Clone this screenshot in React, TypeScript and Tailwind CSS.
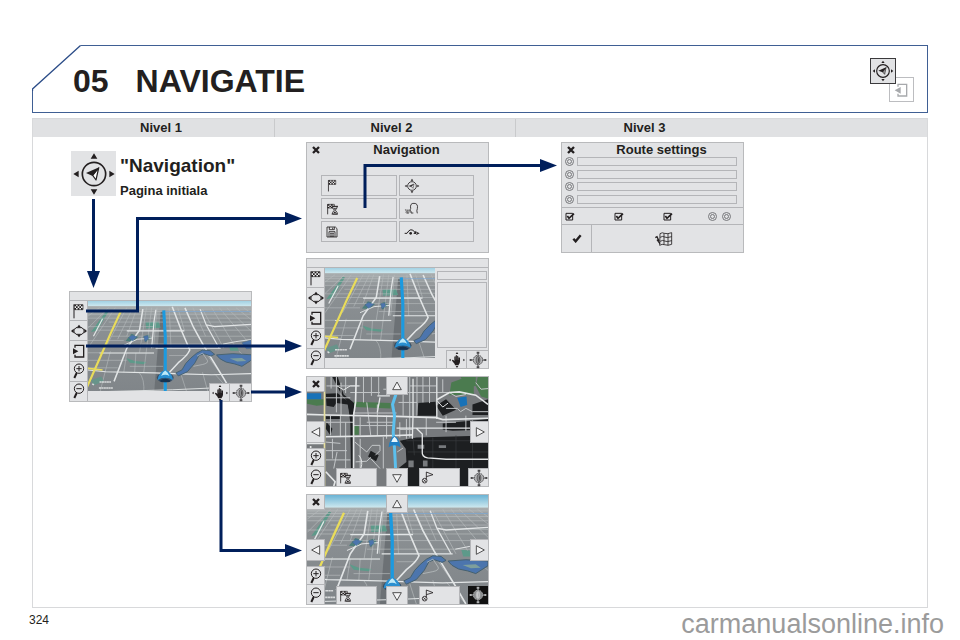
import React from 'react';

type IconProps = { className?: string };

const tile = 'flex items-center justify-center bg-[#e2e3e5] border border-[#b4b5b8]';
const frame = 'w-[183px] h-[111px] bg-[#e2e3e5] border border-[#b9babc]';

/* ---------- Icons ---------- */

const GpsIcon: React.FC<IconProps> = ({ className = 'w-[44px] h-[44px]' }) => (
  <svg viewBox="0 0 132 132" className={className} fill="#231f20" aria-hidden="true">
    <circle cx="66" cy="66" r="35" fill="none" stroke="#231f20" strokeWidth="5" />
    <path d="M66 4 L76 20 H56 Z M66 128 L76 112 H56 Z M4 66 L20 56 V76 Z M128 66 L112 56 V76 Z" />
    <path d="M80 48 L72 84 L62 70 Z" fill="#fff" stroke="#231f20" strokeWidth="3.5" strokeLinejoin="round" />
    <path d="M83 45 L42 63 L62 72 Z" />
  </svg>
);

const SmallGpsIcon: React.FC<IconProps> = ({ className = 'w-[16px] h-[16px]' }) => (
  <svg viewBox="0 0 48 48" className={className} fill="#231f20" aria-hidden="true">
    <circle cx="24" cy="24" r="13" fill="none" stroke="#231f20" strokeWidth="2.5" />
    <path d="M24 2 L28 8 H20 Z M24 46 L28 40 H20 Z M2 24 L8 20 V28 Z M46 24 L40 20 V28 Z" />
    <path d="M30 18 L27 31 L22 26 L16 24 Z" fill="none" stroke="#231f20" strokeWidth="1.5" />
    <path d="M30 18 L16 24 L22 26 Z" />
  </svg>
);

/* Same mark as GpsIcon, with heavier strokes for the header badge */
const BadgeGpsIcon: React.FC = () => (
  <svg viewBox="0 0 72 72" className="w-[24px] h-[24px]" fill="#231f20" aria-hidden="true">
    <circle cx="36" cy="36" r="19" fill="none" stroke="#231f20" strokeWidth="3.5" />
    <path d="M36 5 L41 12 H31 Z M36 67 L41 60 H31 Z M5 36 L12 31 V41 Z M67 36 L60 31 V41 Z" />
    <path d="M45 26 L41 46 L35 39 Z" fill="#aaa" stroke="#231f20" strokeWidth="2" />
    <path d="M47 24 L22 35 L35 40 Z" />
  </svg>
);

const FlagIcon: React.FC<IconProps> = ({ className = 'w-[16px] h-[16px]' }) => (
  <svg viewBox="0 0 48 48" className={className} aria-hidden="true">
    <path d="M9 4 V46" stroke="#231f20" strokeWidth="3" />
    <path d="M10 5 H36 V20 H10 Z" fill="#eee" stroke="#231f20" strokeWidth="2" />
    <path
      d="M10 5h5v5h-5z M20 5h5v5h-5z M30 5h5v5h-5z M15 10h5v5h-5z M25 10h5v5h-5z M10 15h5v5h-5z M20 15h5v5h-5z M30 15h5v5h-5z"
      fill="#231f20"
    />
  </svg>
);

const FlagHourglassIcon: React.FC<IconProps> = ({ className = 'w-[14px] h-[12px]' }) => (
  <svg viewBox="0 0 42 36" className={className} aria-hidden="true">
    <path d="M5 4 V34" stroke="#231f20" strokeWidth="2.5" />
    <path d="M5 4 H25 V15 H5 Z" fill="#eee" stroke="#231f20" strokeWidth="2" />
    <path d="M5 4h5v4h-5z M15 4h5v4h-5z M10 8h5v4h-5z M20 8h5v4h-5z M5 12h5v3h-5z M15 12h5v3h-5z" fill="#231f20" />
    <path d="M17 10 H36 M17 33 H36" stroke="#231f20" strokeWidth="3" />
    <path d="M20 11 V15 L25 21.500 L20 28 V33 H33 V28 L28 21.500 L33 15 V11 Z" fill="#e2e3e5" stroke="#231f20" strokeWidth="2.500" />
    <path d="M22 31 L26.500 25 L31 31 Z M22 16 H31 L26.500 20 Z" fill="#231f20" />
  </svg>
);

const TargetIcon: React.FC = () => (
  <svg viewBox="0 0 48 48" className="w-[16px] h-[16px]" fill="#231f20" aria-hidden="true">
    <path d="M15 14 H33 Q34 18 39 19 V29 Q34 30 33 34 H15 Q14 30 9 29 V19 Q14 18 15 14 Z" fill="none" stroke="#231f20" strokeWidth="3" />
    <path d="M24 5 L30 13 H18 Z M24 43 L30 35 H18 Z M0 24 L8 17 V31 Z M48 24 L40 17 V31 Z" />
  </svg>
);

const EnterIcon: React.FC<{ color?: string; flip?: boolean; className?: string }> = ({
  color = '#231f20',
  flip = false,
  className = 'w-[16px] h-[16px]',
}) => (
  <svg viewBox="0 0 48 48" className={className} aria-hidden="true">
    <path d="M12 14 V7 H38 V42 H12 V35" fill="none" stroke={color} strokeWidth="4" />
    <path d={flip ? 'M2 25 L20 15 V35 Z' : 'M22 25 L6 16 V34 Z'} fill={color} />
  </svg>
);

const ZoomIcon: React.FC<{ plus?: boolean }> = ({ plus = false }) => (
  <svg viewBox="0 0 48 48" className="w-[16px] h-[16px]" fill="none" stroke="#231f20" aria-hidden="true">
    <circle cx="24" cy="17" r="14" strokeWidth="3" />
    <path d={plus ? 'M16 17 H32 M24 9 V25' : 'M16 17 H32'} strokeWidth="3" />
    <path d="M17 30 L10 45" strokeWidth="6" />
  </svg>
);

const HandIcon: React.FC = () => (
  <svg viewBox="0 0 54 48" className="w-[18px] h-[16px]" fill="#231f20" aria-hidden="true">
    <path d="M27 0 L31 6 H23 Z M27 48 L31 42 H23 Z M3 24 L8 20 V28 Z M51 24 L46 20 V28 Z" />
    <path d="M20 36 L12 26 Q12 22 16 24 L19 27 V15 Q21 11 23 15 V11 Q25 7 27 11 V13 Q30 9 31 14 V17 Q35 14 36 19 V29 Q36 33 32 38 V40 H21 Z" />
    <path d="M23 14 V23 M27 12 V23 M31 16 V24" stroke="#aaa" strokeWidth="1" />
  </svg>
);

const CompassIcon: React.FC<{ dark?: boolean }> = ({ dark = false }) => {
  const ink = dark ? '#aeb0b2' : '#4b4a4c';
  return (
    <svg viewBox="0 0 54 54" className="w-[18px] h-[18px]" aria-hidden="true">
      <path d="M27 3 V51 M3 27 H51" stroke={ink} strokeWidth="3" />
      <circle cx="27" cy="27" r="14" fill={dark ? '#8a8c8e' : '#b4b5b7'} stroke={ink} strokeWidth="3" strokeDasharray="5 2" />
      <ellipse cx="27" cy="27" rx="6" ry="11" fill={dark ? '#c8c9cb' : '#8b8c8e'} stroke={ink} strokeWidth="2" />
      <path d="M27 17 L31 27 L27 37 Z" fill={ink} />
      <path d="M23 2h8v6h-8z M23 46h8v6h-8z M2 24h6v6h-6z M46 24h6v6h-6z" fill={ink} />
    </svg>
  );
};

const CloseIcon: React.FC = () => (
  <svg viewBox="0 0 24 24" className="w-[8px] h-[8px]" aria-hidden="true">
    <path d="M3 3 L21 21 M21 3 L3 21" stroke="#231f20" strokeWidth="7" />
  </svg>
);

const TriangleIcon: React.FC<{ d: string }> = ({ d }) => (
  <svg viewBox="0 0 36 36" className="w-[12px] h-[12px]" aria-hidden="true">
    <path d={d} fill="#f4f4f5" stroke="#333" strokeWidth="2.500" />
  </svg>
);

const VoiceIcon: React.FC = () => (
  <svg viewBox="0 0 48 42" className="w-[16px] h-[14px]" fill="none" stroke="#231f20" strokeWidth="2.500" aria-hidden="true">
    <path d="M20 20 Q17 3 30 4 Q43 4 40 20 Q37 26 40 34 M20 20 L17 25 L21 27 V33 H28" />
    <path d="M14 23 Q17 29 13 35 M9 22 Q13 29 9 36 M4 22 Q9 28 6 33" strokeWidth="2" />
  </svg>
);

const SaveIcon: React.FC = () => (
  <svg viewBox="0 0 36 36" className="w-[12px] h-[12px]" fill="none" stroke="#231f20" strokeWidth="2.500" aria-hidden="true">
    <path d="M3 3 H28 L33 8 V33 H3 Z M10 3 V11 H25 V3 M20 5 V10 M9 33 V17 H27 V33 M12 22 H24 M12 27 H24 M12 31 H24" />
  </svg>
);

const DetourIcon: React.FC = () => (
  <svg viewBox="0 0 48 24" className="w-[16px] h-[8px]" aria-hidden="true">
    <path d="M2 16 H9 Q20 -4 33 13" fill="none" stroke="#231f20" strokeWidth="3" />
    <path d="M40 18 L28 17 L36 8 Z M47 16 L37 11 V21 Z" fill="#231f20" />
    <circle cx="20" cy="16" r="4" fill="#231f20" />
  </svg>
);

const WaypointIcon: React.FC = () => (
  <svg viewBox="0 0 45 39" className="w-[15px] h-[13px]" fill="none" stroke="#231f20" strokeWidth="2.500" aria-hidden="true">
    <path d="M19 24 V3 L39 11 L19 17" />
    <circle cx="14" cy="29" r="7" />
    <path d="M10 25 L18 33 M18 25 L10 33" strokeWidth="2" />
  </svg>
);

const MapFoldIcon: React.FC = () => (
  <svg viewBox="0 0 60 48" className="w-[20px] h-[16px]" fill="none" stroke="#231f20" strokeWidth="2.500" aria-hidden="true">
    <path d="M15 8 Q22 3 28 7 Q38 10 50 5 V40 Q40 45 28 41 Q22 38 14 43 Z M27 7 V41 M39 8 V43 M15 19 Q24 14 29 18 T50 17 M15 31 Q24 26 29 30 T50 29" />
    <path d="M1 20 L6 17 L12 30 M6 26 L15 38" strokeWidth="4" />
  </svg>
);

const CheckedBox: React.FC<{ label: string }> = ({ label }) => (
  <label className="flex w-[10px] h-[9px]">
    <input type="checkbox" defaultChecked aria-label={label} className="sr-only" />
    <svg viewBox="0 0 30 27" className="w-[10px] h-[9px]" fill="none" stroke="#231f20" aria-hidden="true">
      <path d="M3 4 H23 V24 H3 Z" strokeWidth="3" />
      <path d="M7 12 L12 19 L27 5" strokeWidth="5" />
    </svg>
  </label>
);

const Ring: React.FC<{ label: string; name: string }> = ({ label, name }) => (
  <input
    type="radio"
    name={name}
    aria-label={label}
    className="appearance-none w-[9px] h-[9px] rounded-full border border-[#77787b] outline-1 outline-[#77787b] -outline-offset-[3px]"
  />
);

/* ---------- Maps ---------- */

const Car: React.FC<{ x: number; y: number }> = ({ x, y }) => (
  <g transform={`translate(${x} ${y})`}>
    <ellipse cx="0" cy="4" rx="28" ry="16" fill="#1f3d5c" opacity="0.7" />
    <path d="M-26 12 Q-22 -16 0 -22 Q22 -16 26 12 Q0 -4 -26 12 Z" fill="#2a8fd0" />
    <path d="M-14 -2 Q-8 -16 0 -20 Q8 -16 14 -2 Q0 -10 -14 -2 Z" fill="#bfeaf8" />
    <path d="M-18 14 Q0 0 18 14 L14 18 H-14 Z" fill="#17324f" />
  </g>
);

const PerspectiveMap: React.FC<{ viewBox: string; id: string }> = ({ viewBox, id }) => (
  <svg viewBox={viewBox} preserveAspectRatio="none" className="w-full h-full" aria-hidden="true">
    <defs>
      <linearGradient id={`${id}-sky`} x1="0" y1="0" x2="0" y2="1">
        <stop offset="0" stopColor="#4ba3cd" />
        <stop offset="1" stopColor="#d3ebf0" />
      </linearGradient>
      <linearGradient id={`${id}-land`} x1="0" y1="0" x2="0" y2="1">
        <stop offset="0" stopColor="#a9aeaf" />
        <stop offset="0.15" stopColor="#8c9194" />
        <stop offset="1" stopColor="#7f8488" />
      </linearGradient>
    </defs>
    <rect x="0" y="0" width="600" height="52" fill={`url(#${id}-sky)`} />
    <rect x="0" y="50" width="600" height="310" fill={`url(#${id}-land)`} />
    <path d="M262 68 H275 L270 342 H240 Z" fill="#6c7175" />

    {/* parks */}
    <g fill="#5d9a8a">
      <path d="M85 62 L92 64 L52 132 L32 136 Z" />
      <path d="M212 104 L255 102 L262 122 L214 124 Z" />
      <path d="M486 178 L512 180 L520 198 L492 198 Z M555 182 H567 V196 H558 Z" />
      <path d="M148 222 L176 232 L215 236 L206 243 L160 238 Z" />
      <path d="M146 166 L165 142 L190 150 L170 168 Z M204 150 L222 144 L230 156 L212 170 Z" fill="#4d7f7c" />
    </g>

    {/* small streets */}
    <g fill="none" stroke="#b6babc" strokeWidth="2">
      <path d="M20 60 H567 M20 68 H567 M20 77 H567 M20 90 H567 M90 103 H567 M20 118 H240 M275 116 H567 M50 130 H567 M100 150 H567 M20 164 H140 M200 176 H567 M20 205 H240 M290 214 H350 M20 230 H150 M160 250 H270 M20 255 H120" />
      <path d="M60 55 L20 85 M90 55 L20 125 M112 55 L28 180 M150 55 L84 180 M170 55 L120 160 M184 55 L150 150 M215 55 L192 205 M232 55 L206 270 M250 55 L238 190 M290 55 L296 190 M318 55 L340 130 M368 55 L410 150 M400 60 L470 190 M430 55 L505 180 M455 55 L567 190 M480 55 L567 140 M510 55 L567 100 M535 55 L567 78" />
      <path d="M96 200 L60 342 M150 205 L140 270 M180 205 L176 270 M296 130 H340 M400 190 L470 290 M330 280 L350 342 M440 275 L500 342 M520 200 L567 240 M190 270 Q210 290 206 342 M400 270 L420 342" />
    </g>

    {/* avenues */}
    <g fill="none" stroke="#e2e5e6" strokeWidth="5">
      <path d="M203 60 L192 130 L150 190 L108 300" />
      <path d="M246 62 L240 100 L232 190" strokeWidth="4" />
      <path d="M300 52 L330 130 L358 196 Q350 215 320 238 L285 276" />
      <path d="M342 56 L370 120 L404 182 L470 290 L500 342" />
      <path d="M392 60 L412 112 L455 190 M412 112 L440 118 L567 110" strokeWidth="4" />
      <path d="M70 92 L40 150 M150 132 H340 M245 190 H460 M20 262 L80 268 L240 272 L330 275 L430 278 L567 274" strokeWidth="4" />
      <path d="M60 206 H240 M40 335 L300 328 L430 322" strokeWidth="3" />
      <path d="M140 180 L185 160 L235 156 M468 176 L510 168 L567 160" strokeWidth="3" />
    </g>

    {/* lakes */}
    <g fill="#4c75ad" stroke="#45606e" strokeWidth="3">
      <path d="M400 196 L425 198 L440 210 L428 216 L405 208 L388 214 L374 240 L350 268 L320 282 L312 272 L332 262 L345 240 L362 222 Q380 204 400 196 Z" />
      <path d="M446 212 L500 208 L567 212 V226 L530 250 L506 242 L478 236 Q454 226 446 212 Z" />
      <path d="M156 154 L168 146 L184 152 L168 166 Z M206 150 L220 148 L222 158 L210 168 Z" strokeWidth="1" />
      <path d="M530 172 L567 160 V190 L545 192 Z" strokeWidth="1" />
    </g>
    <path d="M490 224 L530 222 L545 232 L515 234 Z" fill="#7f9f9c" />
    <path d="M382 216 L400 206 L416 230 Q420 240 400 244 L370 250" fill="none" stroke="#c3c8ca" strokeWidth="2" />

    {/* yellow road */}
    <path d="M131 66 L96 142 L60 225 L14 330" fill="none" stroke="#e9dc5a" strokeWidth="7" />
    <path d="M14 256 L70 262" fill="none" stroke="#e9dc5a" strokeWidth="5" />

    {/* route */}
    <path d="M272 68 H567" stroke="#6f9fce" strokeWidth="2" />
    <path d="M272 64 L277 150 V342" fill="none" stroke="#1b9ae0" strokeWidth="10" />
    <Car x={277} y={284} />
    <path d="M32 296 L66 284 L74 300 L40 314 Z" fill="#5d9a8a" opacity="0.7" />
    <path d="M60 302 H98 M36 308 L42 312 M58 322 H104" stroke="#d8dadb" strokeWidth="5" strokeDasharray="7 1" />
  </svg>
);

const FlatMap: React.FC = () => (
  <svg viewBox="19 13 548 330" preserveAspectRatio="none" className="w-full h-full" aria-hidden="true">
    <rect x="0" y="0" width="600" height="360" fill="#777a7d" />
    <g fill="#1d1f21">
      <path d="M76 64 L112 62 L140 84 L162 92 V118 H148 L142 96 L108 92 L100 104 L78 100 Z" />
      <path d="M96 13 L122 64 L142 88 L150 150 L152 290 H162 L158 150 L160 90 L130 66 L112 13 Z" />
      <path d="M356 92 L408 88 L412 130 H352 Z M430 154 L567 140 V172 L460 176 L430 172 Z" />
      <path d="M300 206 L350 196 L567 190 V343 H292 V292 L320 270 L318 230 Z" />
      <path d="M76 132 H120 V140 H76 Z M410 100 L440 80 L470 112 L430 130 Z M520 96 L567 80 V128 H520 Z" />
      <path d="M204 254 L212 236 L236 250 L228 268 Z M78 150 L96 170 L90 190 L76 170 Z" />
    </g>
    <g fill="#4b7b4f">
      <path d="M19 80 H70 V98 L48 100 L19 94 Z M160 88 L272 92 V108 L164 104 Z M160 160 H176 V188 H160 Z" />
      <path d="M456 30 L500 14 H524 V66 L450 68 Z M536 13 H567 V78 L546 72 L530 40 Z M484 13 H530 V40 L500 44 Z" />
    </g>
    <path d="M19 62 H62 V80 H19 Z M474 76 L502 72 L504 98 L484 104 Z" fill="#1872b8" />

    <path d="M320 206 H567 M324 240 L567 240 M340 196 L344 250 M400 196 V343 M470 190 V343 M520 190 V343" stroke="#3a3d40" strokeWidth="2" />
    <path d="M354 218 H374 V230 H354 Z M418 220 H440 V228 H418 Z M326 266 H342 V286 H326 Z M370 266 H384 V284 H370 Z" fill="#777a7d" />

    <g fill="none" stroke="#c3c6c8" strokeWidth="3">
      <path d="M78 40 H180 M92 13 V48 M108 13 V120 M122 30 V130 M136 13 V62 M76 76 H150 M150 60 H240 M190 13 V90 M214 13 V70 M236 13 V68 M160 122 H290 M200 90 L212 190 M232 96 V190 M250 50 H290 M300 60 H410 M310 13 V130 M330 13 V196 M352 13 V130 M370 13 V90 M390 13 V92 M330 40 H410 M296 90 H352 M400 60 H452 M430 20 V60" />
      <path d="M76 150 H160 M90 130 V190 M120 130 V195 M136 150 V290 M76 210 L120 214 M96 200 V260 M76 236 H140 M110 240 L100 290 M76 264 H150 M160 160 H280 M180 135 V190 M200 150 H280 M260 130 V200 M300 150 V196 M320 140 V200 M380 135 V190 M410 150 H470 M440 130 V180 M500 130 V176 M520 145 V180 M300 172 H340" />
      <path d="M164 210 L200 240 L216 220 H240 V236 L226 250 M166 270 L200 268 L212 256 M180 200 V290 M250 195 V290 M212 260 L240 290 M292 240 L310 228 M440 108 L474 108 L484 118 L500 108 L520 118 H567 M530 30 L546 50 L567 48 M450 60 L470 72 L500 66" />
    </g>

    <g fill="none" stroke="#e4e6e7" strokeWidth="5">
      <path d="M19 126 L80 128 L290 132 L410 136 L430 142 L567 138" />
      <path d="M76 194 L200 192 L290 190 L340 188" />
      <path d="M168 13 L166 90 L160 130 V290 L168 343" />
      <path d="M232 70 H270 M240 75 L232 120 M340 18 V130 L338 200 M412 13 V140" strokeWidth="4" />
      <path d="M412 82 L450 60 L480 58 L530 68 L567 96" />
      <path d="M290 168 H567 M350 168 L368 186 V240 Q366 254 384 258 L440 262 H567" strokeWidth="4" />
      <path d="M19 214 H70 M30 222 V343 M76 300 L104 330 L100 343" />
      <path d="M176 250 Q190 266 182 290 M110 40 L130 52 L150 40 L176 40" strokeWidth="3" />
      <path d="M412 84 L430 104 L446 92" strokeWidth="3" />
    </g>
    <path d="M72 13 V343" stroke="#e6dfa0" strokeWidth="5" />
    <path d="M288 66 L278 96 L284 130 L280 180 L284 230 L290 343" fill="none" stroke="#5cc0ee" strokeWidth="9" />
    <path d="M266 226 Q270 196 284 192 Q298 196 302 226 Q284 214 266 226 Z" fill="#1f7fc4" />
    <path d="M274 210 Q278 198 284 194 Q292 200 294 210 Z" fill="#e8f7fc" />
  </svg>
);

/* ---------- Screens ---------- */

const sideButtons = [
  { label: 'Destination', icon: <FlagIcon /> },
  { label: 'Recentre', icon: <TargetIcon /> },
  { label: 'Switch view', icon: <EnterIcon /> },
  { label: 'Zoom in', icon: <ZoomIcon plus /> },
  { label: 'Zoom out', icon: <ZoomIcon /> },
];

const SideBar: React.FC = () => (
  <div className="w-[18px] shrink-0 flex flex-col border-r border-[#b4b5b8] divide-y divide-[#b4b5b8]">
    {sideButtons.map((b) => (
      <button key={b.label} aria-label={b.label} className="flex-1 min-h-0 flex items-center justify-center">
        {b.icon}
      </button>
    ))}
  </div>
);

const CornerButtons: React.FC = () => (
  <div className="absolute right-0 bottom-0 flex">
    <button aria-label="Move map" className={`${tile} w-[21px] h-[18px] border-b-0`}><HandIcon /></button>
    <button aria-label="Orientation" className={`${tile} w-[21px] h-[18px] border-b-0 border-x-0`}><CompassIcon /></button>
  </div>
);

const HomeScreen: React.FC = () => (
  <div className={`${frame} flex flex-col relative`}>
    <div className="h-[9px] border-b border-[#b4b5b8]" />
    <div className="flex-1 min-h-0 flex">
      <SideBar />
      <div className="flex-1 flex flex-col">
        <div className="flex-1 min-h-0"><PerspectiveMap id="home" viewBox="22 33 538 299" /></div>
        <div className="h-[10px]" />
      </div>
    </div>
    <CornerButtons />
  </div>
);

const SplitScreen: React.FC = () => (
  <div className={`${frame} flex flex-col relative`}>
    <div className="h-[9px] border-b border-[#b4b5b8]" />
    <div className="flex-1 min-h-0 flex">
      <SideBar />
      <div className="flex-1 flex flex-col">
        <div className="flex-1 min-h-0"><PerspectiveMap id="split" viewBox="28 33 352 296" /></div>
        <div className="h-[10px]" />
      </div>
      <div className="w-[53px] pt-[3px] pl-[2px] pr-px flex flex-col gap-[2px]">
        <div className="h-[9px] border border-[#b4b5b8]" />
        <div className="h-[66px] border border-[#b4b5b8]" />
      </div>
    </div>
    <CornerButtons />
  </div>
);

const MapControls: React.FC<{ children: React.ReactNode; dark?: boolean }> = ({ children, dark }) => (
  <div className={`${frame} relative`}>
    <div className="absolute inset-0">{children}</div>
    <div className="relative h-full flex flex-col">
      <div className="flex items-start h-[18px]">
        <button aria-label="Close" className={`${tile} w-[18px] h-[15px] border-t-0 border-l-0`}><CloseIcon /></button>
        <button aria-label="Up" className={`${tile} w-[22px] h-[18px] border-t-0 ml-[61px]`}><TriangleIcon d="M18 6 L31 29 H5 Z" /></button>
      </div>
      <div className="flex justify-between mt-[26px]">
        <button aria-label="Left" className={`${tile} w-[18px] h-[22px] border-l-0`}><TriangleIcon d="M5 18 L29 5 V31 Z" /></button>
        <button aria-label="Right" className={`${tile} w-[18px] h-[22px] border-r-0`}><TriangleIcon d="M31 18 L7 5 V31 Z" /></button>
      </div>
      <div className="flex items-end mt-auto">
        <div className="flex flex-col">
          <button aria-label="Zoom in" className={`${tile} w-[18px] h-[19px] border-l-0`}><ZoomIcon plus /></button>
          <button aria-label="Zoom out" className={`${tile} w-[18px] h-[19px] border-l-0 border-y-0`}><ZoomIcon /></button>
        </div>
        <button aria-label="Options" className={`${tile} w-[41px] h-[18px] border-b-0 ml-[11px] justify-start pl-[2px]`}><FlagHourglassIcon /></button>
        <button aria-label="Down" className={`${tile} w-[22px] h-[18px] border-b-0 ml-[9px]`}><TriangleIcon d="M18 31 L31 8 H5 Z" /></button>
        <button aria-label="Add waypoint" className={`${tile} w-[41px] h-[18px] border-b-0 ml-[11px] justify-start`}><WaypointIcon /></button>
        {dark ? (
          <button aria-label="Orientation" className="flex items-center justify-center w-[20px] h-[18px] ml-auto bg-[#111]"><CompassIcon dark /></button>
        ) : (
          <button aria-label="Orientation" className={`${tile} w-[20px] h-[18px] ml-auto border-b-0 border-r-0`}><CompassIcon /></button>
        )}
      </div>
    </div>
  </div>
);

const ScreenTitle: React.FC<{ title: string }> = ({ title }) => (
  <div className="flex items-center h-[13px]">
    <button aria-label="Close" className="w-[18px] flex items-center justify-center"><CloseIcon /></button>
    <h3 className="flex-1 text-center text-[13px] leading-[13px] font-bold whitespace-nowrap">{title}</h3>
  </div>
);

const menu = [
  { label: 'Enter destination', icon: <FlagIcon className="w-[13px] h-[13px]" /> },
  { label: 'Position', icon: <SmallGpsIcon /> },
  { label: 'Route options', icon: <FlagHourglassIcon className="w-[14px] h-[12px]" /> },
  { label: 'Voice', icon: <VoiceIcon /> },
  { label: 'Save', icon: <SaveIcon /> },
  { label: 'Detour', icon: <DetourIcon /> },
];

const NavigationMenu: React.FC = () => (
  <div className={frame}>
    <ScreenTitle title="Navigation" />
    <div className="grid grid-cols-2 gap-[2px] w-[153px] ml-[14px] mt-[19px]">
      {menu.map((m) => (
        <button key={m.label} aria-label={m.label} className="h-[21px] border border-[#b4b5b8] flex items-center pl-[4px]">
          {m.icon}
        </button>
      ))}
    </div>
  </div>
);

const RouteSettings: React.FC = () => (
  <div className={`${frame} flex flex-col`}>
    <ScreenTitle title="Route settings" />
    <div className="flex flex-col justify-between h-[47px] mt-px">
      {['Route 1', 'Route 2', 'Route 3', 'Route 4'].map((r) => (
        <div key={r} className="flex items-center pl-[3px] gap-[3px]">
          <Ring label={r} name="route" />
          <input type="text" aria-label={`${r} name`} className="block w-[160px] h-[9px] border border-[#b4b5b8] bg-transparent" />
        </div>
      ))}
    </div>
    <div className="flex items-center h-[18px] mt-[3px] pl-[3px] border-y border-[#b4b5b8]">
      <div className="flex gap-[39px]">
        <CheckedBox label="Tolls" />
        <CheckedBox label="Ferries" />
        <CheckedBox label="Traffic" />
      </div>
      <div className="flex gap-[5px] ml-[35px]">
        <Ring label="2D" name="view" />
        <Ring label="3D" name="view" />
      </div>
    </div>
    <div className="flex-1 flex">
      <button aria-label="Confirm" className="w-[30px] border-r border-[#b4b5b8] flex items-center justify-center">
        <svg viewBox="0 0 30 27" className="w-[10px] h-[9px]" aria-hidden="true">
          <path d="M4 14 L11 22 L26 4" fill="none" stroke="#231f20" strokeWidth="7" />
        </svg>
      </button>
      <button aria-label="Show on map" className="flex-1 flex items-center justify-center pr-[6px]"><MapFoldIcon /></button>
    </div>
  </div>
);

/* Lines that link a button with the screen it opens */
const Connectors: React.FC = () => (
  <svg viewBox="33 119 720 488" className="absolute left-0 top-0 w-[720px] h-[488px] pointer-events-none" aria-hidden="true">
    <g fill="none" stroke="#001f5b" strokeWidth="3">
      <path d="M93.500 199 V274" />
      <path d="M86 311 H137.500 V218.500 H288" />
      <path d="M86 346 H288" />
      <path d="M251 392 H288" />
      <path d="M221 400 V550.500 H288" />
      <path d="M365 208 V165.500 H542" />
    </g>
    <g fill="#001f5b">
      <path d="M87 271 H100 L93.500 288 Z" />
      <path d="M285 212 L302 218.500 L285 225 Z" />
      <path d="M285 339.500 L302 346 L285 352.500 Z" />
      <path d="M285 385.500 L302 392 L285 398.500 Z" />
      <path d="M285 544 L302 550.500 L285 557 Z" />
      <path d="M540 159 L557 165.500 L540 172 Z" />
    </g>
  </svg>
);

const App: React.FC = () => {
  return (
    <div className="min-h-screen bg-white text-[#231f20] font-['Liberation_Sans',Arial,sans-serif] pt-[45px] pl-[32px] pr-[32px]">
      {/* Header */}
      <header className="relative flex h-[68px] border border-[#3f5f94] items-start">
        <svg viewBox="0 0 50 46" className="absolute -left-px -top-px w-[50px] h-[46px]" aria-hidden="true">
          <path d="M0 0 H49 L1 44 H0 Z" fill="#fff" />
          <path d="M0.500 46 V44 L48.500 0.500" fill="none" stroke="#2c4d88" strokeWidth="1.300" />
        </svg>
        <h1 className="relative flex gap-[27px] pl-[40px] pt-[17px] text-[32px] leading-[36px] font-bold">
          <span>05</span>
          <span>NAVIGATIE</span>
        </h1>
        <div className="ml-auto mr-[13px] mt-[12px] flex items-start">
          <button aria-label="Navigation" className="relative z-10 w-[26px] h-[26px] border border-[#3b3a3c] bg-[#e2e3e5] flex items-center justify-center">
            <BadgeGpsIcon />
          </button>
          <button aria-label="Back" className="w-[25px] h-[25px] -ml-[7px] mt-[19px] border border-[#bcbdc0] flex items-center justify-center">
            <EnterIcon flip color="#a7a9ac" />
          </button>
        </div>
      </header>

      {/* Level overview */}
      <main className="relative mt-[5px] border border-[#d8d9db]">
        <table className="w-full table-fixed border-collapse">
          <colgroup>
            <col className="w-[241px]" />
            <col className="w-[241px]" />
            <col />
          </colgroup>
          <thead>
            <tr className="bg-[#e0e1e3] text-[13px] leading-[18px] text-left">
              <th className="h-[18px] p-0 pl-[107px] font-bold border-r border-[#c9cacc]">Nivel 1</th>
              <th className="h-[18px] p-0 pl-[96px] font-bold border-r border-[#c9cacc]">Nivel 2</th>
              <th className="h-[18px] p-0 pl-[108px] font-bold">Nivel 3</th>
            </tr>
          </thead>
          <tbody>
            <tr className="align-top">
              <td className="p-0 pt-[14px] pl-[36px]">
                <div className="flex gap-[4px] pl-[2px]">
                  <div className="w-[45px] h-[45px] bg-[#e2e3e5] flex items-center justify-center">
                    <GpsIcon />
                  </div>
                  <div>
                    <h2 className="text-[19px] leading-[24px] pt-[3px] font-bold">"Navigation"</h2>
                    <p className="text-[13px] leading-[16px] pt-[5px] font-bold">Pagina initiala</p>
                  </div>
                </div>
                <div className="mt-[92px]">
                  <HomeScreen />
                </div>
              </td>
              <td className="p-0 pt-[5px] pl-[32px]">
                <NavigationMenu />
                <div className="mt-[5px]"><SplitScreen /></div>
                <div className="mt-[7px]"><MapControls><FlatMap /></MapControls></div>
                <div className="mt-[7px] mb-[2px]">
                  <MapControls dark><PerspectiveMap id="explore" viewBox="19 12 548 330" /></MapControls>
                </div>
              </td>
              <td className="p-0 pt-[5px] pl-[46px]">
                <RouteSettings />
              </td>
            </tr>
          </tbody>
        </table>
        <Connectors />
      </main>

      {/* Footer */}
      <footer className="flex justify-between items-start -ml-[3px] -mr-[16px]">
        <span className="text-[12px] leading-[14px] pt-[5px]">324</span>
        <a href="#" className="text-[27px] leading-[32px] text-[#9b9b9b]">carmanualsonline.info</a>
      </footer>
    </div>
  );
};

export default App;
